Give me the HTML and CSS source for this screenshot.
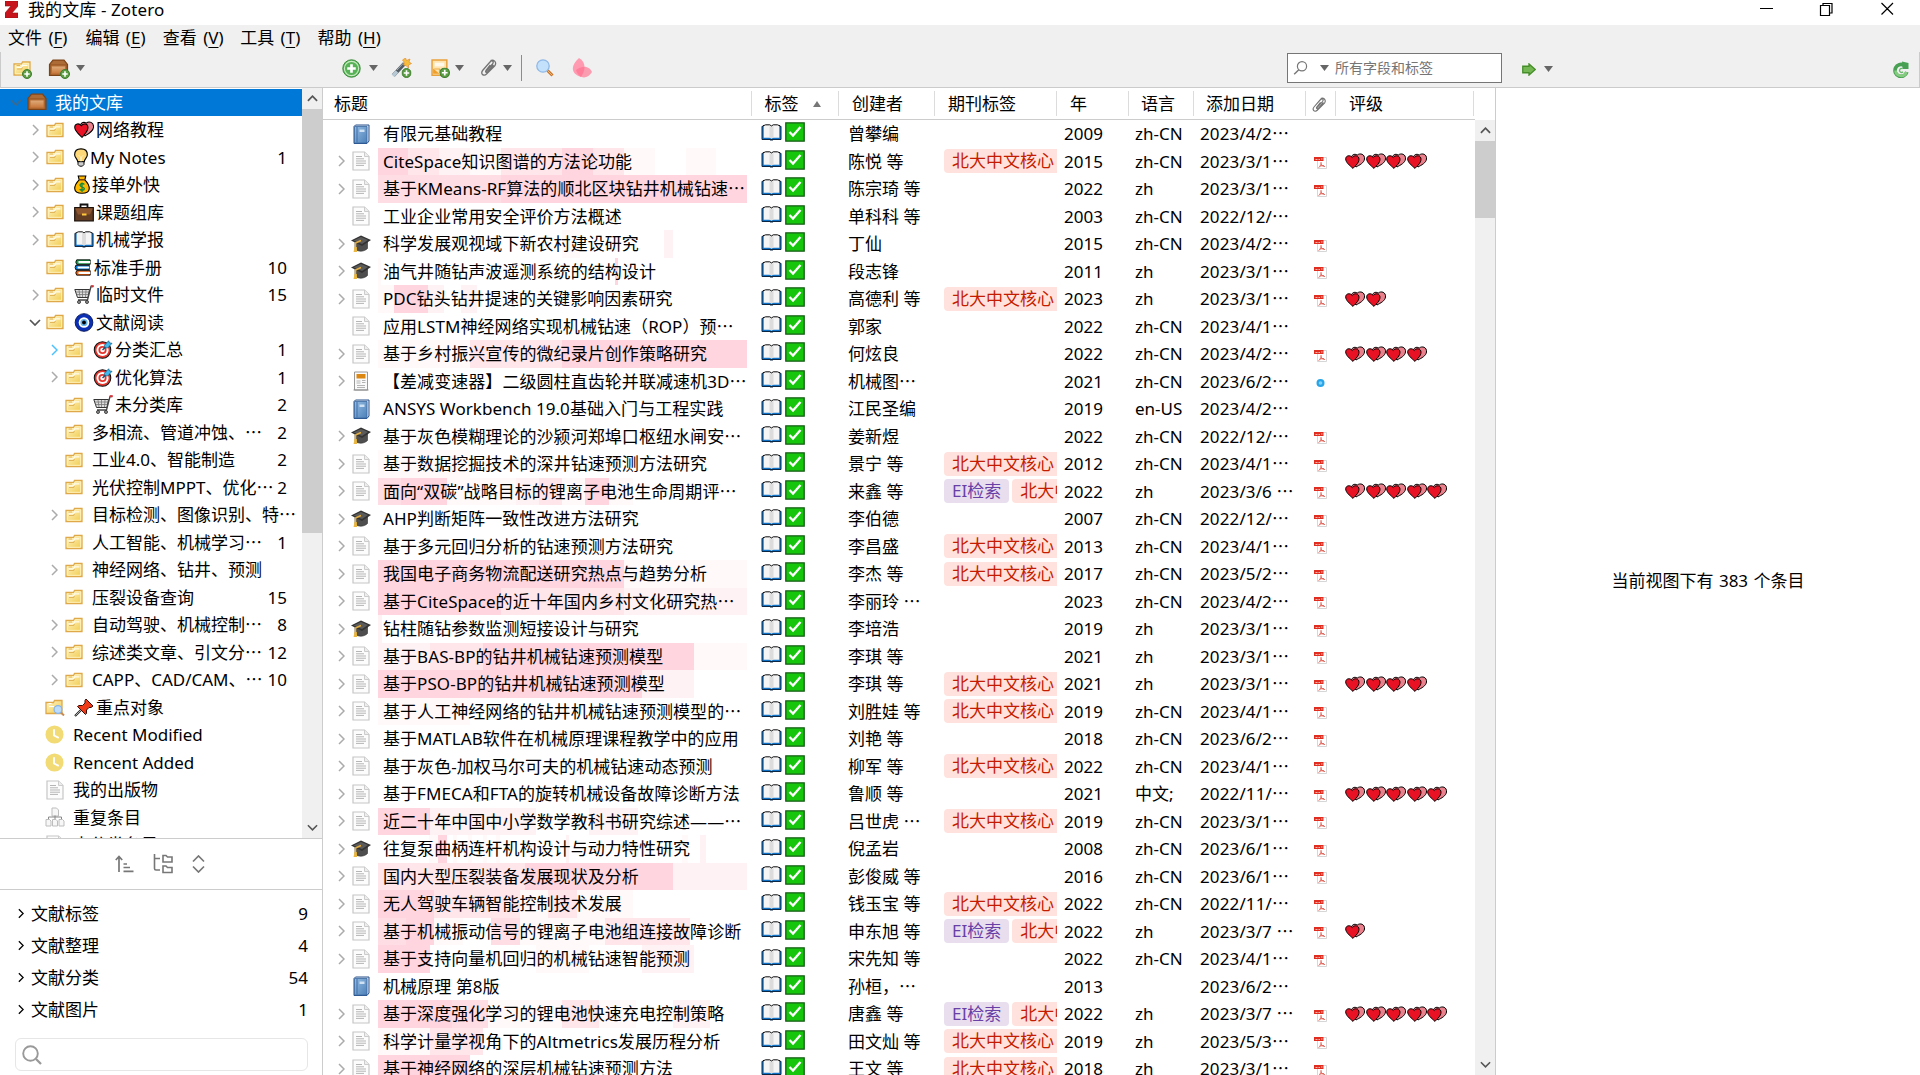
FILE: index.html
```html
<!DOCTYPE html>
<html lang="zh-CN">
<head>
<meta charset="utf-8">
<title>我的文库 - Zotero</title>
<link rel="stylesheet" href="styles.css">
</head>
<body>
<svg class="sprite" aria-hidden="true">
  <defs>
    <linearGradient id="g-folder" x1="0" y1="0" x2="1" y2="1"><stop offset="0" stop-color="#fff6cf"/><stop offset="1" stop-color="#f1ca48"/></linearGradient>
    <linearGradient id="g-crate" x1="0" y1="0" x2="0" y2="1"><stop offset="0" stop-color="#e0ae7d"/><stop offset="1" stop-color="#c77436"/></linearGradient>
    <linearGradient id="g-blue" x1="0" y1="0" x2="1" y2="1"><stop offset="0" stop-color="#94bce4"/><stop offset="1" stop-color="#4d80b8"/></linearGradient>
    <linearGradient id="g-green" x1="0" y1="0" x2="0" y2="1"><stop offset="0" stop-color="#4fae52"/><stop offset="1" stop-color="#83cf7c"/></linearGradient>
  </defs>
  <symbol id="folder" viewBox="0 0 18 16"><path d="M1 3.5V14.5H17V1.5H9.5L8.5 3.5Z" fill="url(#g-folder)" stroke="#dfa94a" stroke-width="1.3"/><path d="M2.3 4.700V13.300H15.700V2.800H10.200L9.300 4.700Z" fill="none" stroke="#fff3bd" stroke-width="1"/><path d="M3.500 6.800H8.300L9.700 4.800H14.500" fill="none" stroke="#fffdf0" stroke-width="1.300"/><path d="M3.500 5h3.500M4 8.500H8.500L9.500 7" fill="none" stroke="#e3b65a" stroke-width="1.100"/></symbol>
  <symbol id="folderfind" viewBox="0 0 20 17"><path d="M1 3.5V14.5H17V1.5H9.5L8.5 3.5Z" fill="url(#g-folder)" stroke="#dfa94a" stroke-width="1.3"/><path d="M3.5 4.5h3M4 7.5H9" stroke="#fff" stroke-width="1.2"/><path d="M15.5 13l3.5 3.5" stroke="#c98b56" stroke-width="2"/><circle cx="13" cy="10.5" r="3.9" fill="#bcdcfa" stroke="#86b4ea" stroke-width="1.2"/></symbol>
  <symbol id="clock" viewBox="0 0 20 20"><circle cx="10" cy="10" r="9.5" fill="#f2da74"/><path d="M9.5 4.5V11L14.5 13.5" fill="none" stroke="#fff" stroke-width="1.9"/></symbol>
  <symbol id="doc" viewBox="0 0 18 20"><path d="M1 1H12.5L17 5.5V19H1Z" fill="#fcfcfc" stroke="#c6c6c6" stroke-width="1.2"/><path d="M12.5 1V5.5H17" fill="#eee" stroke="#ccc"/><path d="M4 5.5H10M4 7.8H12M4 10H14M4 12.2H14M4 14.4H12" stroke="#b5b5b5" stroke-width="1"/></symbol>
  <symbol id="dup" viewBox="0 0 20 20"><path d="M7 1h4.500l2 2v6H7ZM1 12.500H4.500l1.500 1.500v5H1ZM7.500 12.500h3.500l1.500 1.500v5h-5ZM14 12.500h3.500l1.500 1.500v5h-5Z" fill="#f7f7f7" stroke="#bdbdbd" stroke-width="1"/><path d="M3.500 12V10H16.500V12M10 8.500v3.500" stroke="#888" stroke-width="1" fill="none"/></symbol>
  <symbol id="crate" viewBox="0 0 20 18"><path d="M4.500 1H15.500L19 5.500V16.500H1V5.500Z" fill="#9f5d29" stroke="#7d4316" stroke-width="1.2"/><path d="M5 2H15L17.500 5H2.500Z" fill="#ad6c36"/><path d="M3 7H17V15H3Z" fill="url(#g-crate)" stroke="#b66f36"/></symbol>
  <symbol id="book" viewBox="0 0 17 20"><path d="M2.500 1H16V17L14 19.500H1V2.500Z" fill="#dbe6f2" stroke="#28508a" stroke-width="1"/><path d="M1.500 2.500H14V19H1.500Z" fill="url(#g-blue)" stroke="#3a689f" stroke-width=".8"/><path d="M4 3V18.500" stroke="#3e6da8" stroke-width="1"/><path d="M6.500 5.500h5v2.500h-5z" fill="#cfe1f3"/></symbol>
  <symbol id="grad" viewBox="0 0 20 18"><path d="M4 7V14C7 17 13 17 16.500 13.500V7Z" fill="#4e4e4e" stroke="#333" stroke-width=".6"/><path d="M0 5.500L10 .5L20 5L11 11Z" fill="#333"/><path d="M2.500 5.500L10 2L17 5L11 9Z" fill="#5a5a5a"/><path d="M10 5.500L4.500 8V15" fill="none" stroke="#e3ad3e" stroke-width="1.500"/><path d="M3.500 12h2.300l.2 5H2.600Z" fill="#eab63e"/></symbol>
  <symbol id="report" viewBox="0 0 16 20"><path d="M1.500 1h13v18h-13z" fill="#fafafa" stroke="#999"/><path d="M3.500 3h9v4.500h-9z" fill="#db8714"/><path d="M3.500 10h4M3.500 12h4M9 9.500h3.500M9 11.500h3.500M4 14.500h8M4 16.500h8" stroke="#b4b4b4"/><path d="M.5 18.500h15v1H.5z" fill="#8d8d8d"/></symbol>
  <symbol id="pdf" viewBox="0 0 13 12"><path d="M3.500 .5H12.500V11.500H3.500Z" fill="#fff" stroke="#ccc" stroke-width=".8"/><path d="M0 0H9.500V4H0Z" fill="#e02d20"/><path d="M1.500 2.500H3.500M4.500 2.500H6M7 2H8.500" stroke="#ffb8b0"/><path d="M7 5C7.500 8 6.500 9.500 4.500 10.500M7 6.500C7.500 8.500 8.500 9.500 11 9.500M5.500 9L10 8.500" fill="none" stroke="#e05b50" stroke-width=".9"/></symbol>
  <symbol id="dot" viewBox="0 0 13 12"><circle cx="6.500" cy="6" r="4" fill="#27a5e8"/><circle cx="6.500" cy="6" r="1.800" fill="#83d2fb"/></symbol>
  <symbol id="hearts" viewBox="0 0 20 16" preserveAspectRatio="none"><path d="M9.500 12L6.500 6C6 1.500 9.500 .4 12.300 2C15 -.2 20 1 19.500 6C19 10 14.500 12 11 14Z" fill="#e9808b" stroke="#000" stroke-width="1"/><path d="M8 15.400C4.500 12.300 .6 9.300 .7 5.800C.8 2.500 5 1.600 7.300 4.500C9.500 1.600 14 2.500 14 6.200C14 10 10.500 12.500 8 15.400Z" fill="#e81224" stroke="#000" stroke-width="1"/></symbol>
  <symbol id="openbook" viewBox="0 0 21 17" preserveAspectRatio="none"><path d="M1 2.300H20V15.500H1Z" fill="#1173c7" stroke="#0c2744" stroke-width="1"/><path d="M2.700 1.300H8.800L10.500 2.300L12.200 1.300H18.300V13.800H12.200L10.500 14.600L8.800 13.800H2.700Z" fill="#f5f5f5"/><path d="M2 1.500H3L4.500 .8H8.800L10.500 2L12.200 .8H16.500L18 1.500H19" fill="none" stroke="#111" stroke-width="1"/><path d="M8.500 2V13.500L10.500 14.500L12.500 13.500V2L10.500 3Z" fill="#dcdcdc"/><path d="M9 15.900H12" stroke="#0c2744" stroke-width="1.200"/></symbol>
  <symbol id="check" viewBox="0 0 20 20"><path d="M.8 .8H19.200V19.200H.8Z" fill="#16c60c" stroke="#165c16" stroke-width="1.300"/><path d="M4.500 10L8 13.500L15.500 5" fill="none" stroke="#fff" stroke-width="2.300"/></symbol>
  <symbol id="bulb" viewBox="0 0 15 20"><path d="M7.500 .7C3 .7 .7 3.500 .7 7C.7 10 3.500 11 4 14.500H11C11.500 11 14.300 10 14.300 7C14.300 3.500 12 .7 7.500 .7Z" fill="#ffd977" stroke="#000" stroke-width="1.200"/><path d="M4.300 14.500H10.700V17.500L9 19.300H6L4.300 17.500Z" fill="#ccc" stroke="#000"/><path d="M5 7.500L7 9.500V14M10 7.500L8 9.500V14" fill="none" stroke="#fff2bf"/></symbol>
  <symbol id="money" viewBox="0 0 17 20"><path d="M5.500 5C1.500 9 .7 12 .8 14.500C1 18 3 19.300 8.500 19.300C14 19.300 16 18 16.200 14.500C16.300 12 15.500 9 11.500 5L12.500 1H4.500Z" fill="#ffb900" stroke="#000" stroke-width="1.200"/><path d="M5.500 5H11.500" stroke="#6b3a12" stroke-width="1.500"/><path d="M11 10C9 8 6 9 6.500 11C7 13 11 12.500 11 14.500C10.500 16.500 7.500 16.500 6 15M8.500 8V18" fill="none" stroke="#10893e" stroke-width="1.400"/></symbol>
  <symbol id="case" viewBox="0 0 20 18"><path d="M6.500 4V1H13.500V4" fill="none" stroke="#111" stroke-width="1.800"/><path d="M.7 4H19.300V17.300H.7Z" fill="#613c22" stroke="#1b0f08" stroke-width="1.200"/><path d="M1.300 5H18.700L16 11H4Z" fill="#8e562e"/><path d="M8 10h4.500v2H8z" fill="#ffc83d"/></symbol>
  <symbol id="books" viewBox="0 0 20 19"><path d="M3 1H18V6H3Q1 3.500 3 1Z" fill="#16a34a" stroke="#000"/><path d="M2 7H17V12H2Q.5 9.500 2 7Z" fill="#0078d7" stroke="#000"/><path d="M3 13H18V18H3Q1 15.500 3 13Z" fill="#f7630c" stroke="#000"/><path d="M5 2.300H18V4.700H5ZM4 8.300H17V10.700H4ZM5 14.300H18V16.700H5Z" fill="#fff"/></symbol>
  <symbol id="cart" viewBox="0 0 20 19"><path d="M.8 4.500H15.500L14 12.500H3.500Z" fill="#dedede" stroke="#333" stroke-width="1"/><path d="M2 7H15M2.500 9.500H14.500M5 5L6 12M8.500 5V12M12 5L11.500 12" stroke="#777" stroke-width=".8"/><path d="M19 1.500H17L13.500 15H4" fill="none" stroke="#444" stroke-width="1.300"/><path d="M16.800 1.200h3" stroke="#d13438" stroke-width="2"/><circle cx="5" cy="17" r="1.500" fill="#999" stroke="#222" stroke-width=".8"/><circle cx="13" cy="17" r="1.500" fill="#999" stroke="#222" stroke-width=".8"/></symbol>
  <symbol id="nazar" viewBox="0 0 20 20"><circle cx="10" cy="10" r="9.300" fill="#0b2fb5" stroke="#06175c"/><circle cx="10" cy="10" r="5.600" fill="#fff"/><circle cx="10" cy="10" r="3.800" fill="#69b7ef"/><circle cx="10" cy="10" r="2" fill="#000"/></symbol>
  <symbol id="target" viewBox="0 0 20 20"><circle cx="9.500" cy="10.500" r="8.700" fill="#e8352b" stroke="#111" stroke-width="1.100"/><circle cx="9.500" cy="10.500" r="6.400" fill="#fff"/><circle cx="9.500" cy="10.500" r="4.300" fill="#e8352b"/><circle cx="9.500" cy="10.500" r="2.400" fill="#fff"/><path d="M9.500 10.500L15 5" stroke="#134a73" stroke-width="1.400"/><path d="M11.500 5.500L16 .8L16.800 3L19.500 3.500L15 8.500L12 8Z" fill="#40b8f0" stroke="#124d6b" stroke-width=".7"/></symbol>
  <symbol id="pin" viewBox="0 0 20 19"><path d="M1 18L8 11" stroke="#222" stroke-width="2.200"/><path d="M1.500 17.500L8 11" stroke="#bbb" stroke-width=".9"/><path d="M12 1L19 8L17 9.500H15L12.500 12V15.500L11.500 16.500L3.500 8.500L5 7.500H8.500L11 5V2.500Z" fill="#f03a17" stroke="#3d0b03" stroke-width="1"/></symbol>
  <symbol id="plus" viewBox="0 0 20 20"><circle cx="10" cy="10" r="9.200" fill="#58b257" stroke="#3b8c3c"/><circle cx="10" cy="10" r="7.500" fill="none" stroke="#c9ebc3" stroke-width="1.200"/><path d="M10 5.500V14.500M5.500 10H14.500" stroke="#fff" stroke-width="2.800"/></symbol>
  <symbol id="badge" viewBox="0 0 10 10"><circle cx="5" cy="5" r="4.500" fill="#5c9e45" stroke="#3f7d2e"/><path d="M5 2.300V7.700M2.300 5H7.700" stroke="#fff" stroke-width="1.600"/></symbol>
  <symbol id="wand" viewBox="0 0 20 20"><path d="M1.800 17.500L13 5.500" stroke="#535c63" stroke-width="4"/><path d="M1.500 17.800L5.500 13.500" stroke="#b6c9d5" stroke-width="3.500"/><path d="M5.500 12L12 5" stroke="#a2adb5" stroke-width="1"/><path d="M14 0L15 2.500L18.500 1L17.500 4L20 5.500L17 7L17 10L14.500 7.500L12 7L13 4.500L11 2Z" fill="#f5bd3a" stroke="#e48d33" stroke-width=".7"/><use href="#badge" x="10" y="10" width="10" height="10"/></symbol>
  <symbol id="note" viewBox="0 0 18 18"><path d="M1 1H15V15.500H1Z" fill="#fde4b0" stroke="#e7a13b" stroke-width="1.400"/><path d="M3.500 3.500H12.500V7H3.500Z" fill="#fff9eb"/><path d="M2 9L8 14H2Z" fill="#ef9e29"/><path d="M3 9.500h5v4" fill="none" stroke="#f0ab43"/><use href="#badge" x="8" y="8" width="10" height="10"/></symbol>
  <symbol id="clip" viewBox="0 0 16 18"><path d="M5 13L12 5C14 2.500 11.500 .8 9.500 3L2.500 11C-.5 14.500 3 18 6 15L14.500 6.500C16.500 3 13 0 10 1.500M9.800 6L5.500 11.500C4.500 13 6 14 7 13L13 6" fill="none" stroke="#737373" stroke-width="1.300"/></symbol>
  <symbol id="lens" viewBox="0 0 18 18"><path d="M11.500 11.500L16.500 16.500" stroke="#c9752d" stroke-width="3"/><path d="M11.500 11.500L16.500 16.500" stroke="#efb76c" stroke-width="1"/><circle cx="7" cy="7" r="6.200" fill="#c4e1fb" stroke="#8fb9e6" stroke-width="1.300"/></symbol>
  <symbol id="petals" viewBox="0 0 20 20"><path d="M7 0C14 4 14 12 9 19C-1 16 -2 8 7 0Z" fill="#ff9ab0"/><path d="M4 12C12 6 18 9 20 14C16 21 7 22 4 12Z" fill="#ff708f" opacity=".65"/></symbol>
  <symbol id="find" viewBox="0 0 14 14"><circle cx="8.500" cy="5.300" r="4.600" fill="none" stroke="#777" stroke-width="1.200"/><path d="M5.300 8.700L.7 13.300" stroke="#777" stroke-width="1.400"/></symbol>
  <symbol id="go" viewBox="0 0 13 12"><path d="M.7 3H6.500V.8L12.300 6L6.500 11.200V9H.7Z" fill="#73b752" stroke="#468d2a" stroke-width="1.200"/></symbol>
  <symbol id="sync" viewBox="0 0 16 17"><path d="M13.800 11A6 6 0 1 1 11 4.200" fill="none" stroke="#48a052" stroke-width="3.600"/><path d="M13.400 11A5.600 5.600 0 0 1 2.500 9.500" fill="none" stroke="#85cc80" stroke-width="2.600"/><path d="M9 .5L15.500 2V8L9.500 8Z" fill="#48a052"/><path d="M10 10.800A2 2 0 1 1 9.500 7.700" fill="none" stroke="#68b669" stroke-width="1.300"/></symbol>
  <symbol id="right" viewBox="0 0 7 12"><path d="M1 1L6 6L1 11" fill="none" stroke="currentColor" stroke-width="1.500"/></symbol>
  <symbol id="down" viewBox="0 0 12 7"><path d="M1 1L6 6L11 1" fill="none" stroke="currentColor" stroke-width="1.700"/></symbol>
  <symbol id="up" viewBox="0 0 12 7"><path d="M1 6L6 1L11 6" fill="none" stroke="currentColor" stroke-width="1.900"/></symbol>
  <symbol id="tri" viewBox="0 0 9 6"><path d="M0 0H9L4.500 6Z" fill="#666"/></symbol>
</svg>

<header class="titlebar">
  <svg class="logo" viewBox="0 0 13 17"><path d="M0 0H13V5L7 12H13V17H0V12L6 5H0Z" fill="#c8141c" stroke="#8e1015" stroke-width=".6"/></svg>
  <span class="apptitle">我的文库 - Zotero</span>
  <svg class="wincontrols" viewBox="0 0 134 14"><path d="M0 6.500H13M60.500 3.500H69.500V13.500H60.500ZM63 3V1.500H72V11H70M121.500 1L133 12.500M133 1L121.500 12.500" fill="none" stroke="#000" stroke-width="1.200"/></svg>
</header>
<nav class="menubar">
  <span>文件 (<u>F</u>)</span><span>编辑 (<u>E</u>)</span><span>查看 (<u>V</u>)</span><span>工具 (<u>T</u>)</span><span>帮助 (<u>H</u>)</span>
</nav>
<div class="toolbar">
  <div class="tools-left">
    <span class="badged"><svg width="18" height="17"><use href="#folder"/></svg><svg class="mark"><use href="#badge"/></svg></span>
    <span class="badged"><svg width="21" height="18"><use href="#crate"/></svg><svg class="mark"><use href="#badge"/></svg></span>
    <svg class="tri"><use href="#tri"/></svg>
  </div>
  <div class="tools-mid">
    <svg width="19" height="19"><use href="#plus"/></svg><svg class="tri t1"><use href="#tri"/></svg>
    <svg class="wand" width="21" height="20"><use href="#wand"/></svg>
    <svg class="note" width="19" height="19"><use href="#note"/></svg><svg class="tri t2"><use href="#tri"/></svg>
    <svg class="attach" width="17" height="18"><use href="#clip"/></svg><svg class="tri t3"><use href="#tri"/></svg>
    <i class="sep"></i>
    <svg width="18" height="18"><use href="#lens"/></svg>
    <svg class="petals" width="20" height="20"><use href="#petals"/></svg>
  </div>
  <div class="quicksearch"><svg width="15" height="14"><use href="#find"/></svg><svg class="tri"><use href="#tri"/></svg><span>所有字段和标签</span></div>
  <div class="tools-right"><svg width="14" height="13"><use href="#go"/></svg><svg class="tri"><use href="#tri"/></svg><svg class="sync" width="16" height="17"><use href="#sync"/></svg></div>
</div>
<main class="panes">
  <aside class="side">
    <section class="collections">
      <div class="tree" id="tree"></div>
      <div class="scroll"><svg class="arrow"><use href="#up"/></svg><div class="thumb left-thumb"></div><svg class="arrow end"><use href="#down"/></svg></div>
    </section>
    <div class="tagtools">
      <svg width="19" height="18" viewBox="0 0 19 18"><path d="M4 17V2M.8 5L4 1.500L7.200 5M8.500 9H12M8.500 12.500H15M8.500 16.300H18.500" fill="none" stroke="#777" stroke-width="1.700"/></svg>
      <svg width="20" height="20" viewBox="0 0 20 20"><path d="M1.500 0V14.500Q1.500 16 3 16H7M1.500 4.500H7M10 1.500h3l1.500 1.500H19V8H10ZM10 12h3l1.500 1.500H19V18.500H10Z" fill="none" stroke="#777" stroke-width="1.600"/></svg>
      <svg width="13" height="18" viewBox="0 0 13 18"><path d="M1 6.500L6.500 1L12 6.500M1 11.500L6.500 17L12 11.500" fill="none" stroke="#777" stroke-width="1.700"/></svg>
    </div>
    <section class="tags" id="tags"></section>
    <div class="tagsearch"><svg width="20" height="20" viewBox="0 0 20 20"><circle cx="8.500" cy="8.500" r="7.300" fill="none" stroke="#999" stroke-width="1.900"/><path d="M14 14L19 19" stroke="#999" stroke-width="2.300"/></svg></div>
  </aside>
  <section class="items">
    <div class="head grid">
      <span>标题</span><span>标签<svg class="sortmark" viewBox="0 0 8 6"><path d="M4 0L8 6H0Z" fill="#777"/></svg></span><span>创建者</span><span>期刊标签</span><span>年</span><span>语言</span><span>添加日期</span><span class="cliphead"><svg width="14" height="16"><use href="#clip"/></svg></span><span>评级</span>
    </div>
    <div class="body"><div class="rows" id="rows"></div>
      <div class="scroll"><svg class="arrow"><use href="#up"/></svg><div class="thumb right-thumb"></div><svg class="arrow end"><use href="#down"/></svg></div>
    </div>
  </section>
  <aside class="details"><p>当前视图下有 383 个条目</p></aside>
</main>
<script src="app.js"></script>
</body>
</html>
```

FILE: styles.css
```css
* { box-sizing: border-box; }
body { margin: 0; width: 1920px; height: 1075px; overflow: hidden; display: flex; flex-direction: column; background: #fff; color: #000; font: 17px/27px "Noto Sans", "Noto Sans CJK SC", sans-serif; white-space: nowrap; }
svg { display: block; flex: none; }
.sprite { position: absolute; width: 0; height: 0; }
.dots { font-family: "Noto Sans CJK SC", sans-serif; line-height: 1; }

.titlebar { height: 25px; flex: none; display: flex; align-items: flex-start; padding-left: 5px; }
.logo { width: 13px; height: 17px; margin-top: 1px; }
.apptitle { margin-left: 10px; line-height: 20px; flex: 1; letter-spacing: .1px; }
.wincontrols { width: 134px; height: 14px; margin: 2px 26px 0 0; }
.menubar { height: 27px; flex: none; background: #f0f0f0; display: flex; padding-left: 8px; line-height: 26px; }
.menubar span { width: 77.4px; word-spacing: 2px; }
.menubar u { text-underline-offset: 3px; text-decoration-thickness: 1px; }

.toolbar { height: 36px; flex: none; background: #f0f0f0; border: solid #cbcbcb; border-width: 0 1px 1px; display: flex; align-items: center; padding-bottom: 3px; }
.tri { width: 9px; height: 6px; }
.tools-left { width: 341px; display: flex; align-items: center; padding-left: 12px; }
.badged { display: flex; align-items: flex-end; margin-right: 17px; }
.badged + .badged { margin-right: 7px; }
.mark { width: 10px; height: 10px; margin: 0 -1px -2px -9px; }
.tools-mid { width: 945px; display: flex; align-items: center; }
.t1 { margin-left: 8px; } .t2 { margin-left: 5px; } .t3 { margin-left: 6px; }
.wand { margin-left: 13px; } .note { margin-left: 19px; } .attach { margin-left: 16px; }
.sep { width: 1px; height: 26px; background: #8c8c8c; margin: 0 14px 0 9px; }
.petals { margin-left: 18px; }
.quicksearch { width: 215px; height: 30px; border: 1px solid #767676; background: #fff; display: flex; align-items: center; padding-left: 5px; color: #757575; font-size: 14px; line-height: 26px; }
.quicksearch .tri { margin: 0 6px 0 12px; }
.tools-right { flex: 1; display: flex; align-items: center; padding: 2px 10px 0 20px; }
.tools-right .tri { margin-left: 8px; }
.sync { margin-left: auto; }

.panes { flex: 1; min-height: 0; display: flex; }
.side { width: 323px; border-right: 1px solid #ccc; display: flex; flex-direction: column; flex: none; }
.collections { height: 751px; border-bottom: 1px solid #ccc; display: flex; }
.tree { width: 302px; overflow: hidden; padding-top: .5px; }
.node { height: 27.5px; display: flex; align-items: center; padding-right: 15px; }
.node .twist { width: 14px; margin-right: 3px; display: flex; justify-content: center; color: #ababab; }
.lv0 { padding-left: 9px; background: #0078d7; color: #fff; }
.lv0 .twist { color: #3d698d; }
.lv0 .label { margin-left: 7px; }
.lv1 { padding-left: 28px; } .lv2 { padding-left: 47px; }
.node .opened { color: #555; } .node .hot { color: #4cc2ff; }
.node .label { display: flex; align-items: center; gap: 2px; }
.lv1 .label, .lv2 .label { margin-left: 9px; }
.node .pic { margin-left: 1px; }
.iconbox { width: 19px; display: flex; justify-content: center; }
.lv0 .iconbox { width: 22px; }
.count { margin-left: auto; }
.wide { padding-right: 0; }
.scroll { width: 20px; background: #f0f0f0; display: flex; flex-direction: column; align-items: center; flex: none; }
.arrow { width: 11px; height: 7px; margin: 7px 0; color: #555; }
.thumb { width: 20px; background: #cdcdcd; }
.left-thumb { height: 424px; } .right-thumb { height: 77px; }
.end { margin-top: auto; }
.tagtools { height: 51px; flex: none; border-bottom: 1px solid #ccc; display: flex; align-items: center; justify-content: center; gap: 19px; padding-right: 3px; }
.tags { padding: 7px 14px 0 18px; }
.tagrow { height: 32px; display: flex; align-items: center; }
.tagrow span { margin-left: 7px; } .tagrow b { margin-left: auto; font-weight: 400; }
.tagsearch { margin: 13px 14px 0 15px; height: 33px; border: 1px solid #e6e6e6; border-radius: 6px; display: flex; align-items: center; padding-left: 6px; }

.items { width: 1173px; border-right: 1px solid #ccc; display: flex; flex-direction: column; flex: none; }
.grid { display: grid; grid-template-columns: 428.500px 87.500px 96px 122px 72px 65px 112px 30px 138px; }
.head { height: 32px; flex: none; border-bottom: 1px solid #ccc; margin-right: 20px; align-items: center; }
.head span { border-right: 1px solid #dcdcdc; height: 25px; line-height: 25px; padding-left: 13px; display: flex; align-items: center; }
.head span:first-child { padding-left: 11px; } .head span:nth-child(6) { padding-left: 12px; } .head span:nth-child(7) { padding-left: 12px; }
.head span.cliphead { padding: 3px 0 0 6px; }
.sortmark { width: 8px; height: 6px; margin-left: 14px; }
.body { flex: 1; min-height: 0; display: flex; }
.rows { width: 1152px; overflow: hidden; }
.row { height: 27.5px; }
.row > div { display: flex; align-items: center; overflow: hidden; min-width: 0; height: 27.5px; }
.row .title { padding-left: 15px; }
.title .twist { width: 7px; margin-right: 6px; color: #ababab; }
.kind { width: 20px; display: flex; justify-content: center; }
.name { margin-left: 7px; padding-left: 5px; width: 369px; height: 27.5px; line-height: 27px; overflow: hidden; background-repeat: no-repeat; letter-spacing: .06px; }
.row .state { padding: 0 0 3px 9px; gap: 3px; }
.row .author { padding-left: 9px; }
.row .journal { padding-left: 9px; gap: 3px; }
.pill { height: 24px; line-height: 24px; padding: 0 8px; border-radius: 4px; background: #ffe2dd; color: #c41c00; flex: none; }
.pill.ei { background: #e8deee; color: #6940a5; }
.row .year { padding-left: 7px; } .row .lang { padding-left: 6px; } .row .date { padding-left: 6px; letter-spacing: .12px; }
.row .file { padding: 4px 0 0 8px; }
.row .rating { padding-left: 9px; gap: .5px; }
.details { flex: 1; display: flex; justify-content: center; align-items: center; }
.details p { margin: 0; padding-bottom: 3px; word-spacing: 1px; }
```

FILE: app.js
```javascript
const icon = (id, w, h, cls = '') => `<svg class="${cls}" width="${w}" height="${h}"><use href="#${id}"/></svg>`;
const text = s => s.replace(/…/g, '<span class="dots">…</span>');

// level | twisty (c closed, o open, h hover, - none) | icon | emoji | label | count
const tree = `0|o|crate||我的文库|
1|c|folder|hearts|网络教程|
1|c|folder|bulb|My Notes|1
1|c|folder|money|接单外快|
1|c|folder|case|课题组库|
1|c|folder|openbook|机械学报|
1|-|folder|books|标准手册|10
1|c|folder|cart|临时文件|15
1|o|folder|nazar|文献阅读|
2|h|folder|target|分类汇总|1
2|c|folder|target|优化算法|1
2|-|folder|cart|未分类库|2
2|-|folder||多相流、管道冲蚀、…|2
2|-|folder||工业4.0、智能制造|2
2|-|folder||光伏控制MPPT、优化…|2
2|c|folder||目标检测、图像识别、特…|
2|-|folder||人工智能、机械学习…|1
2|c|folder||神经网络、钻井、预测|
2|-|folder||压裂设备查询|15
2|c|folder||自动驾驶、机械控制…|8
2|c|folder||综述类文章、引文分…|12
2|c|folder||CAPP、CAD/CAM、…|10
1|-|folderfind|pin|重点对象|
1|-|clock||Recent Modified|
1|-|clock||Rencent Added|
1|-|doc||我的出版物|
1|-|dup||重复条目|
1|-|doc||未分类条目|`.split('\n');
const size = { crate: [20, 18], folder: [18, 16], folderfind: [20, 17], clock: [19, 19], doc: [18, 20], dup: [20, 20] };
const emojiWidth = { bulb: 14, money: 16, books: 18 };
document.getElementById('tree').innerHTML = tree.map(line => {
  const [lv, tw, ic, em, label, n] = line.split('|');
  const twist = tw === '-' ? '' : tw === 'o' ? icon('down', 12, 7) : icon('right', 7, 12);
  const cls = tw === 'o' && lv !== '0' ? ' opened' : tw === 'h' ? ' hot' : '';
  const w = emojiWidth[em] || 20;
  return `<div class="node lv${lv}${n ? '' : ' wide'}"><span class="twist${cls}">${twist}</span><span class="iconbox">${icon(ic, ...size[ic])}</span><span class="label">${em ? icon(em, w, em === 'hearts' || em === 'openbook' ? 17 : 19, 'pic') : ''}<span>${text(label)}</span></span><span class="count">${n}</span></div>`;
}).join('');

document.getElementById('tags').innerHTML = [['文献标签', 9], ['文献整理', 4], ['文献分类', 54], ['文献图片', 1]]
  .map(([t, n]) => `<div class="tagrow">${icon('right', 6, 11)}<span>${t}</span><b>${n}</b></div>`).join('');

// kind | twisty | title | creator | journal tags | year | language | date | file | rating | reading trace (start-end+strength)
const rows = `book||有限元基础教程|曾攀编||2009|zh-CN|2023/4/2…||0|
doc|c|CiteSpace知识图谱的方法论功能|陈悦 等|B|2015|zh-CN|2023/3/1…|pdf|4|0-30s 30-61m 61-92l 92-123f 123-184m 184-215s 215-246m 246-277f 308-338f
doc|c|基于KMeans-RF算法的顺北区块钻井机械钻速…|陈宗琦 等||2022|zh|2023/3/1…|pdf|0|0-123n 123-369s
doc||工业企业常用安全评价方法概述|单科科 等||2003|zh-CN|2022/12/…||0|
grad|c|科学发展观视域下新农村建设研究|丁仙||2015|zh-CN|2023/4/2…|pdf|0|184-202f 286-295l
grad|c|油气井随钻声波遥测系统的结构设计|段志锋||2011|zh|2023/3/1…|pdf|0|0-3f 237-240s
doc|c|PDC钻头钻井提速的关键影响因素研究|高德利 等|B|2023|zh|2023/3/1…|pdf|2|0-16f 16-50s 50-66l 83-99l
doc||应用LSTM神经网络实现机械钻速（ROP）预…|郭家||2022|zh-CN|2023/4/1…||0|
doc|c|基于乡村振兴宣传的微纪录片创作策略研究|何炫良||2022|zh-CN|2023/4/2…|pdf|4|0-92f 92-184m 184-369s
report|c|【差减变速器】二级圆柱直齿轮并联减速机3D…|机械图…||2021|zh-CN|2023/6/2…|dot|0|
book||ANSYS Workbench 19.0基础入门与工程实践|江民圣编||2019|en-US|2023/4/2…||0|
grad|c|基于灰色模糊理论的沙颍河郑埠口枢纽水闸安…|姜新煜||2022|zh-CN|2022/12/…|pdf|0|
doc|c|基于数据挖掘技术的深井钻速预测方法研究|景宁 等|B|2012|zh-CN|2023/4/1…|pdf|0|0-92f
doc|c|面向“双碳”战略目标的锂离子电池生命周期评…|来鑫 等|EB|2022|zh|2023/3/6 …|pdf|5|0-23n 23-69s 69-138f 138-161l 161-184m 184-207f 207-231s 231-255f
grad|c|AHP判断矩阵一致性改进方法研究|李伯德||2007|zh-CN|2022/12/…|pdf|0|
doc|c|基于多元回归分析的钻速预测方法研究|李昌盛|B|2013|zh-CN|2023/4/1…|pdf|0|
doc|c|我国电子商务物流配送研究热点与趋势分析|李杰 等|B|2017|zh-CN|2023/5/2…|pdf|0|0-246s 246-369f
doc|c|基于CiteSpace的近十年国内乡村文化研究热…|李丽玲 …||2023|zh-CN|2023/4/2…|pdf|0|0-123s 123-246m 246-369l
grad|c|钻柱随钻参数监测短接设计与研究|李培浩||2019|zh|2023/3/1…|pdf|0|0-4l
doc|c|基于BAS-BP的钻井机械钻速预测模型|李琪 等||2021|zh|2023/3/1…|pdf|0|0-52l 52-105m 105-316s 316-369f
doc|c|基于PSO-BP的钻井机械钻速预测模型|李琪 等|B|2021|zh|2023/3/1…|pdf|4|0-264s 264-316l
doc|c|基于人工神经网络的钻井机械钻速预测模型的…|刘胜娃 等|B|2019|zh-CN|2023/4/1…|pdf|0|0-92f
doc|c|基于MATLAB软件在机械原理课程教学中的应用|刘艳 等||2018|zh-CN|2023/6/2…|pdf|0|
doc|c|基于灰色-加权马尔可夫的机械钻速动态预测|柳军 等|B|2022|zh-CN|2023/4/1…|pdf|0|
doc|c|基于FMECA和FTA的旋转机械设备故障诊断方法|鲁顺 等||2021|中文;|2022/11/…|pdf|5|
doc|c|近二十年中国中小学数学教科书研究综述——…|吕世虎 …|B|2019|zh-CN|2023/3/1…|pdf|0|0-52s 52-158l 211-260l
grad|c|往复泵曲柄连杆机构设计与动力特性研究|倪孟岩||2008|zh-CN|2023/6/1…|pdf|0|51-60f 60-69s 75-79f 90-94f 105-109f 118-122f 188-191l 304-310f 322-328l
doc|c|国内大型压裂装备发展现状及分析|彭俊威 等||2016|zh-CN|2023/6/1…|pdf|0|0-147m 147-295s 295-369l
doc|c|无人驾驶车辆智能控制技术发展|钱玉宝 等|B|2022|zh-CN|2022/11/…|pdf|0|0-56s 56-142m 142-170f 170-199m 199-255f
doc|c|基于机械振动信号的锂离子电池组连接故障诊断|申东旭 等|EB|2022|zh|2023/3/7 …|pdf|1|0-28n 28-56s 56-85f 113-142n 142-227f 227-312m
doc|c|基于支持向量机回归的机械钻速智能预测|宋先知 等||2022|zh-CN|2023/4/1…|pdf|0|0-52s 158-211f 264-316l
book||机械原理 第8版|孙桓，…||2013||2023/6/2…||0|
doc|c|基于深度强化学习的锂电池快速充电控制策略|唐鑫 等|EB|2022|zh|2023/3/7 …|pdf|5|0-74s 74-110n 110-184f 184-221m 221-258f 295-332l
doc|c|科学计量学视角下的Altmetrics发展历程分析|田文灿 等|B|2019|zh|2023/5/3…|pdf|0|0-52f 52-105m
doc|c|基于神经网络的深层机械钻速预测方法|王文 等|B|2018|zh|2023/3/1…|pdf|0|0-92s`.split('\n');
const shade = { s: '#ffd6e0', n: '#ffdde5', m: '#ffe6eb', l: '#fff2f5', f: '#fff9fa' };
const kinds = { book: [17, 20], doc: [18, 20], grad: [20, 18], report: [16, 20] };
const trace = h => {
  if (!h) return '';
  const seg = h.split(' ').map(s => s.match(/(\d+)-(\d+)(\w)/));
  return `style="background-image:${seg.map(m => `linear-gradient(${shade[m[3]]},${shade[m[3]]})`)};background-position:${seg.map(m => m[1] + 'px 0')};background-size:${seg.map(m => (m[2] - m[1]) + 'px 100%')}"`;
};
const pills = { '': '', B: '<span class="pill">北大中文核心</span>', EB: '<span class="pill ei">EI检索</span><span class="pill">北大中文核心</span>' };
document.getElementById('rows').innerHTML = rows.map(line => {
  const [k, tw, title, who, tags, year, lang, date, file, stars, h] = line.split('|');
  return `<div class="row grid"><div class="title"><span class="twist">${tw ? icon('right', 7, 12) : ''}</span><span class="kind">${icon(k, ...kinds[k])}</span><span class="name" ${trace(h)}>${text(title)}</span></div>
<div class="state">${icon('openbook', 21, 17)}${icon('check', 20, 20)}</div><div class="author"><span>${text(who)}</span></div><div class="journal">${pills[tags]}</div><div class="year">${year}</div><div class="lang">${lang}</div><div class="date"><span>${text(date)}</span></div><div class="file">${file ? icon(file, 13, 12) : ''}</div><div class="rating">${icon('hearts', 20, 16).repeat(+stars)}</div></div>`;
}).join('');
```
